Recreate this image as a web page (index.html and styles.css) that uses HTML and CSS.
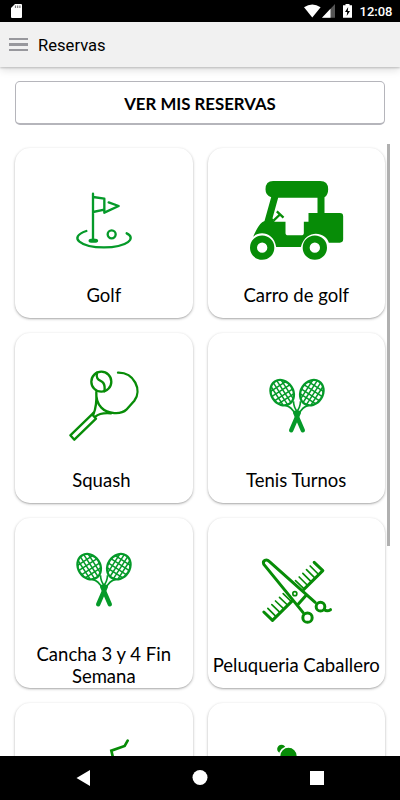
FILE: index.html
```
<!DOCTYPE html>
<html lang="es">
<head>
<meta charset="utf-8">
<title>Reservas</title>
<link rel="stylesheet" href="styles.css">
</head>
<body>
<svg width="0" height="0" class="defs">
  <defs>
    <g id="half-racket">
      <g transform="translate(65 68) rotate(-33)">
        <ellipse rx="33" ry="40" fill="none" stroke-width="7"/>
        <path d="M-18-32V32M-6-39V39M6-39V39M18-32V32M-28-22H28M-33-7H33M-33 8H33M-27 22H27" stroke-width="4.500" fill="none"/>
      </g>
      <path d="M74 106Q94 110 104 133M99 94Q99 112 112 128" fill="none" stroke-width="5"/>
      <path d="M104 128L127 181" stroke-width="13" stroke-linecap="round"/>
    </g>
    <g id="rackets">
      <use href="#half-racket"/>
      <use href="#half-racket" transform="matrix(-1 0 0 1 219 0)"/>
    </g>
  </defs>
</svg>
<div class="phone">
  <div class="status">
    <svg class="sd" width="11" height="14" viewBox="0 0 11 14"><path d="M4 0H10Q11 0 11 1V13Q11 14 10 14H1Q0 14 0 13V4Z" fill="#fff"/><path d="M4.5 1.5V4M6.7 1.5V4M8.9 1.5V4" stroke="#777" stroke-width="1.2"/></svg>
    <svg class="signals" width="49" height="15" viewBox="0 0 49 15">
      <path d="M0 3.2Q8.3-2.4 16.6 3.2L8.3 13.5Z" fill="#fff"/>
      <path d="M31 0V13.7H18Z" fill="#555"/><path d="M26.5 4.8V13.7H18Z" fill="#fff"/>
      <path d="M39 1.3H41.5V0H45.5V1.3H48V13.7H39Z" fill="#fff"/><path d="M44.2 3L41 8H43.2L42.7 12L46 7H43.8Z" fill="#000"/>
    </svg>
    <span>12:08</span>
  </div>
  <header class="appbar">
    <div class="menu"><i></i><i></i><i></i></div>
    <h1>Reservas</h1>
  </header>
  <main>
    <button class="mine">VER MIS RESERVAS</button>
    <div class="scroll">
      <div class="grid">
        <section class="card">
          <svg viewBox="-135 -96 532.5 372" class="line lime" stroke-width="7">
            <path d="M99 41V181M99 51L133 56V98M99 96L133 89M133 98L176 78L146 67"/>
            <ellipse cx="100" cy="182" rx="11" ry="3"/>
            <circle cx="155" cy="163" r="12"/>
            <path d="M79 153C22 172 63 202 132 202C203 202 230 174 200 160"/>
          </svg>
          <p>Golf</p>
        </section>
        <section class="card">
          <svg viewBox="-97.5 -66 532.5 372" class="solid">
            <path d="M98 33H239Q263 33 263 58Q263 75 252 82V129H298Q308 129 308 139V208Q308 218 298 218H265C256 186 197 175 181 231H107C99 184 55 183 38 200Q53 166 65 157L72 153L92 82Q75 77 75 58Q75 33 98 33ZM113 83L96 145L102 155H135V188Q135 196 143 196H182Q190 196 190 188V155H204V129H231V83Z" fill-rule="evenodd" stroke="none"/>
            <path d="M99 152L120 132M109 124L129 143" fill="none" stroke-width="7"/>
            <circle cx="65" cy="233" r="26" fill="none" stroke-width="21"/>
            <circle cx="223" cy="233" r="26" fill="none" stroke-width="21"/>
          </svg>
          <p>Carro de golf</p>
        </section>
        <section class="card">
          <svg viewBox="-135 -81 532.5 372" class="line" stroke-width="7">
            <circle cx="124" cy="65" r="30"/>
            <path d="M111 38C106 63 123 59 130 69Q136 78 133 94M109 96Q107 125 124 143C143 163 184 164 199 149L223 122C247 91 223 37 174 38M109 98Q111 137 100 164M153 160Q121 157 106 170"/>
            <path d="M96 163L108 176L43 239L31 226ZM96 163L101 158"/>
          </svg>
          <p>Squash&nbsp;</p>
        </section>
        <section class="card">
          <svg viewBox="-157.5 -111 532.5 372" class="lime"><use href="#rackets"/></svg>
          <p>Tenis Turnos</p>
        </section>
        <section class="card">
          <svg viewBox="-157.5 -78 532.5 372" class="lime"><use href="#rackets"/></svg>
          <p>Cancha 3 y 4 Fin Semana</p>
        </section>
        <section class="card">
          <svg viewBox="-127.5 -96 532.5 372" class="line" stroke-width="9">
            <path d="M40 186L66 211L217 62L191 37" stroke-width="9"/>
            <path d="M52 175L76 199M64 164L88 187M75 153L99 176M87 142L111 165M98 131L122 154M179 48L203 72M168 59L192 83M157 70L181 94M146 81L170 105M135 92L160 116" stroke-width="5"/>
            <path d="M128 154L40 43C35 31 48 26 56 34L165 126L146 156Z" fill="#fff" stroke="none"/>
            <path d="M158 188L40 43C35 31 48 26 56 34L194 157M165 138L143 163"/>
            <circle cx="133" cy="131" r="6" stroke-width="5"/>
            <circle cx="171" cy="203" r="14"/>
            <circle cx="210" cy="170" r="13"/>
            <path d="M221 179Q230 186 240 179"/>
          </svg>
          <p>Peluqueria Caballero</p>
        </section>
        <section class="card">
          <svg viewBox="45 41 532.5 372" class="line" stroke-width="8"><path d="M383 154L374 170L334 184L339 205" stroke-linejoin="miter"/></svg>
        </section>
        <section class="card">
          <svg viewBox="622.5 41 532.5 372" class="solid"><circle cx="843" cy="179" r="13" stroke="none"/><circle cx="864" cy="200" r="27" stroke="#fff" stroke-width="5"/></svg>
        </section>
      </div>
      <div class="thumb"></div>
    </div>
  </main>
  <nav>
    <svg width="400" height="44" viewBox="0 0 400 44" fill="#fff"><path d="M76.500 22L90 14V30Z"/><circle cx="200" cy="21.500" r="7.500"/><path d="M310 15H324V29H310Z"/></svg>
  </nav>
</div>
</body>
</html>
```
FILE: styles.css
```
* { box-sizing: border-box; }
body { margin: 0; background: #fff; }
.defs { position: absolute; }
.phone {
  width: 400px;
  height: 800px;
  overflow: hidden;
  display: flex;
  flex-direction: column;
  font-family: Lato, sans-serif;
  color: #000;
}
.status {
  flex: none;
  height: 22px;
  padding: 0 7.5px 0 11px;
  display: flex;
  align-items: center;
  background: #000;
  color: #fff;
  font: 500 13px Roboto, sans-serif;
}
.signals { margin: 0 7px 0 auto; }
.appbar {
  flex: none;
  height: 45px;
  padding-left: 9px;
  display: flex;
  align-items: center;
  gap: 10px;
  background: #f1f1f1;
  box-shadow: 0 1px 2px rgba(0,0,0,.2), 0 3px 8px rgba(0,0,0,.13);
}
.menu { width: 19px; display: grid; gap: 3px; }
.menu i { height: 2.500px; background: #98989d; }
h1 { margin: 0; padding-top: 1px; font: 400 16.600px Roboto, sans-serif; }
main {
  flex: 1;
  min-height: 0;
  padding: 14px 0 0 15px;
  display: flex;
  flex-direction: column;
}
.mine {
  flex: none;
  width: 370px;
  height: 44px;
  padding: 2px 0 0;
  border: 1px solid #b5b5bb;
  border-bottom-width: 2px;
  border-radius: 5px;
  background: #fff;
  color: #000;
  font: 700 16.800px Lato, sans-serif;
}
.scroll {
  flex: 1;
  min-height: 0;
  margin: 19px 0 0 -15px;
  padding-left: 15px;
  display: flex;
  gap: 2px;
  overflow: hidden;
}
.grid {
  width: 370px;
  padding-top: 4px;
  display: grid;
  grid-template-columns: 1fr 1fr;
  grid-auto-rows: 170px;
  gap: 15.150px 15px;
}
.card {
  display: flex;
  flex-direction: column;
  border-radius: 15px;
  background: #fff;
  box-shadow: 0 1px 3px rgba(0,0,0,.28), 0 1px 1px rgba(0,0,0,.1);
}
.card svg { display: block; width: 177.500px; height: 124px; flex: none; fill: #078c07; stroke: #078c07; }
.card svg.line { fill: none; stroke-linecap: round; stroke-linejoin: round; }
.card svg.lime { stroke: #059a29; }
.card p {
  flex: 1;
  margin: 0;
  padding: 0 4px;
  display: flex;
  align-items: center;
  justify-content: center;
  text-align: center;
  font-size: 18.500px;
  line-height: 22px;
}
.thumb { width: 3px; height: 402px; background: #b0b0b0; }
nav { flex: none; height: 44px; background: #000; }
nav svg { display: block; }
```
